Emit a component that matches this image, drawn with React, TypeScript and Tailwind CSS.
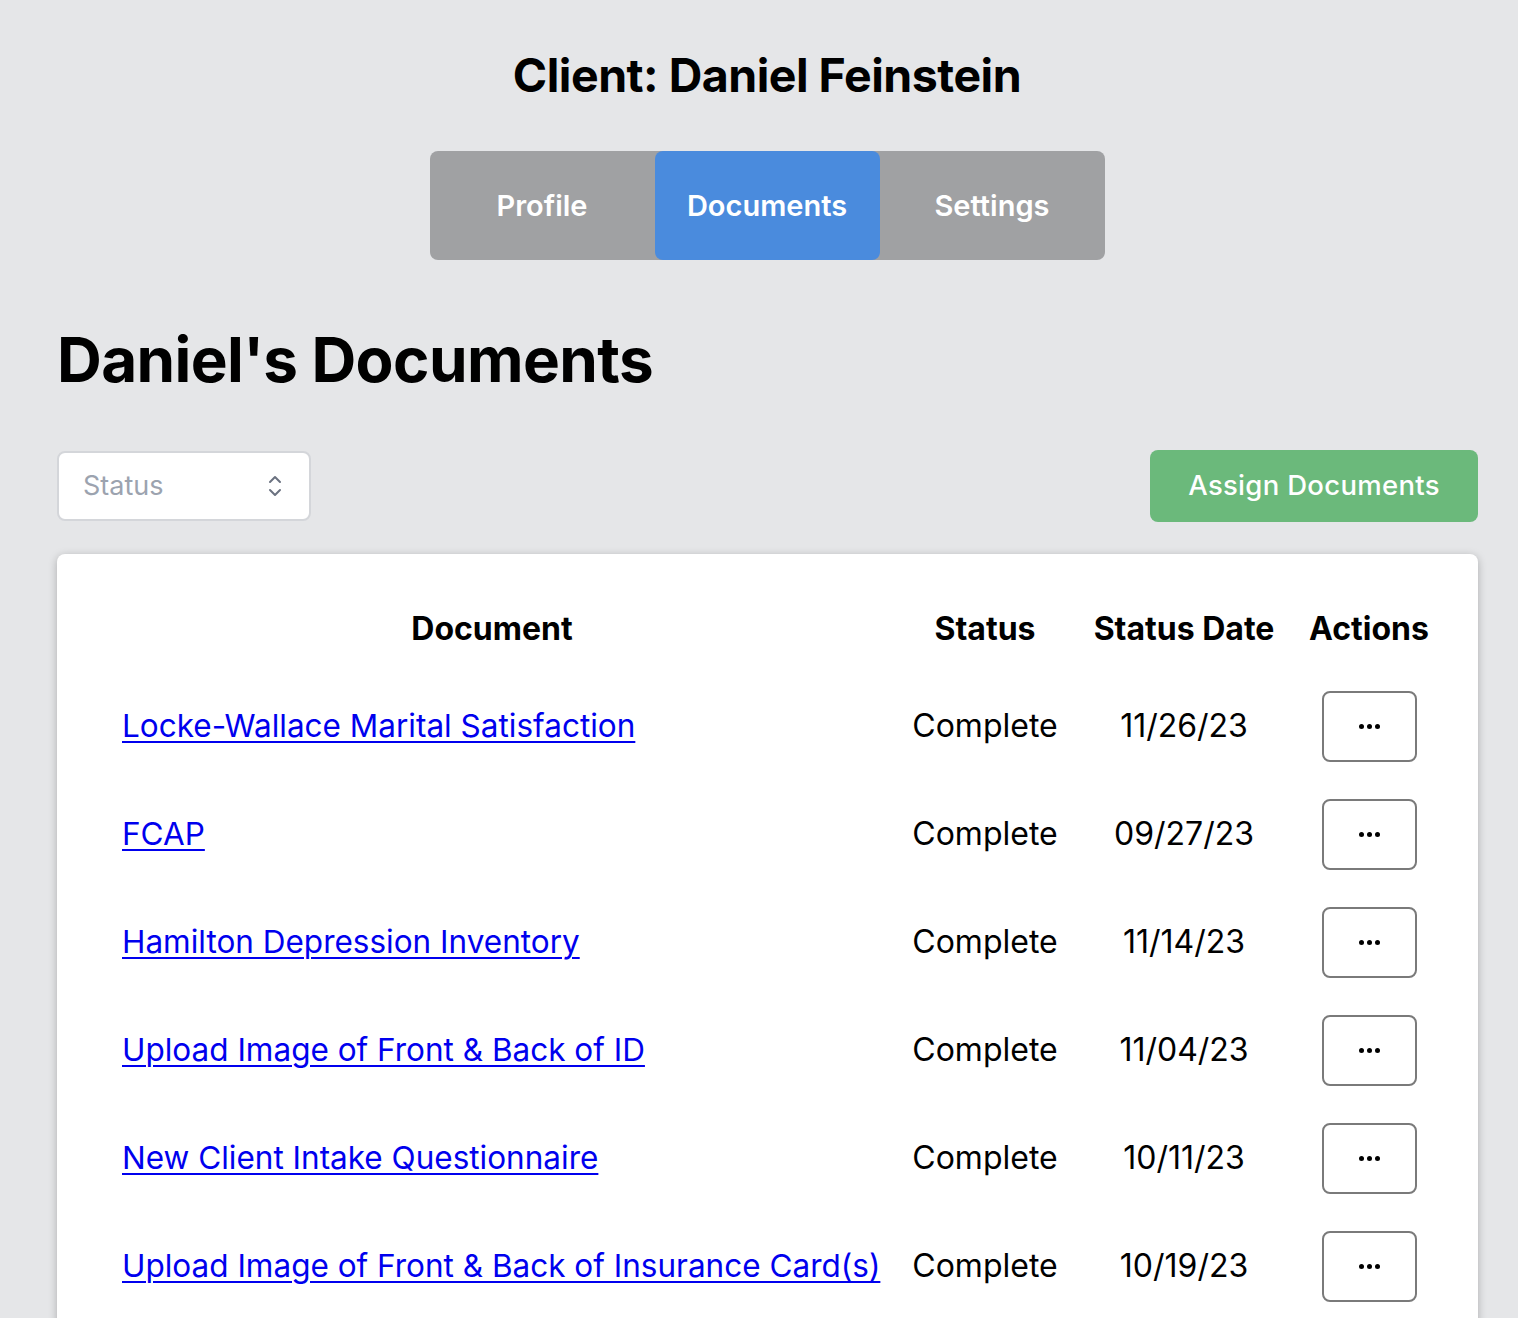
import React from "react";

const rows = [
  { name: "Locke-Wallace Marital Satisfaction", date: "11/26/23" },
  { name: "FCAP", date: "09/27/23" },
  { name: "Hamilton Depression Inventory", date: "11/14/23" },
  { name: "Upload Image of Front & Back of ID", date: "11/04/23" },
  { name: "New Client Intake Questionnaire", date: "10/11/23" },
  { name: "Upload Image of Front & Back of Insurance Card(s)", date: "10/19/23" },
];

function Dots() {
  return (
    <div className="flex items-center gap-[3px]">
      <span className="block w-[5px] h-[5px] rounded-full bg-black" />
      <span className="block w-[5px] h-[5px] rounded-full bg-black" />
      <span className="block w-[5px] h-[5px] rounded-full bg-black" />
    </div>
  );
}

export default function App() {
  return (
    <div
      className="min-h-[1318px] bg-[#e5e6e8] text-black overflow-hidden"
      style={{ fontFamily: "Inter, 'Noto Sans', sans-serif" }}
    >
      <div className="pt-[46px] pl-[16px] flex flex-col items-center">
        <h1 className="text-[46.5px] leading-[58px] font-bold tracking-[-0.5px]">Client: Daniel Feinstein</h1>
        <div className="mt-[47px] flex rounded-lg overflow-hidden bg-[#a0a1a3]">
          {["Profile", "Documents", "Settings"].map((t) => (
            <div
              key={t}
              className={`w-[225px] h-[109px] flex items-center justify-center text-white text-[29px] font-semibold ${
                t === "Documents" ? "bg-[#4a8bdd] rounded-lg" : ""
              }`}
            >
              {t}
            </div>
          ))}
        </div>
      </div>

      <div className="px-[57px] mx-0 w-[1535px]">
        <h2 className="mt-[64px] text-[62px] leading-[72px] font-bold tracking-[-0.6px]">Daniel's Documents</h2>

        <div className="mt-[54px] flex items-center justify-between w-[1421px]">
          <div className="w-[254px] h-[70px] bg-white border-2 border-[#d4d6da] rounded-lg flex items-center justify-between pl-[24px] pr-[26px]">
            <span className="text-[27px] text-[#9ca3af]">Status</span>
            <svg width="16" height="26" viewBox="0 0 16 26" fill="none" stroke="#6b7280" strokeWidth="2" strokeLinecap="round" strokeLinejoin="round">
              <path d="M3 9 L8 4 L13 9" />
              <path d="M3 17 L8 22 L13 17" />
            </svg>
          </div>
          <div className="w-[328px] h-[72px] bg-[#6bb97b] rounded-lg flex items-center justify-center text-white text-[27.5px] font-medium tracking-[0.3px]">
            Assign Documents
          </div>
        </div>

        <div className="mt-[32px] w-[1421px] h-[800px] bg-white rounded-lg shadow-[0_2px_8px_rgba(0,0,0,0.25)] pl-[50px] pt-[39px]">
          <div className="grid grid-cols-[770px_216px_182px_188px] h-[72px] items-center text-[32px] font-bold">
            <div className="text-center">Document</div>
            <div className="text-center">Status</div>
            <div className="text-center">Status Date</div>
            <div className="text-center">Actions</div>
          </div>
          <div className="mt-[7px]">
            {rows.map((r) => (
              <div key={r.name} className="grid grid-cols-[770px_216px_182px_188px] h-[108px] items-center text-[32px]">
                <div className="pl-[15px]">
                  <a href="#" className="text-[#0000ee] text-[31.5px] underline underline-offset-[4px] decoration-2 whitespace-nowrap">
                    {r.name}
                  </a>
                </div>
                <div className="text-center">Complete</div>
                <div className="text-center">{r.date}</div>
                <div className="flex justify-center">
                  <div className="w-[95px] h-[71px] border-2 border-[#7a7a7a] rounded-lg flex items-center justify-center">
                    <Dots />
                  </div>
                </div>
              </div>
            ))}
          </div>
        </div>
      </div>
    </div>
  );
}
